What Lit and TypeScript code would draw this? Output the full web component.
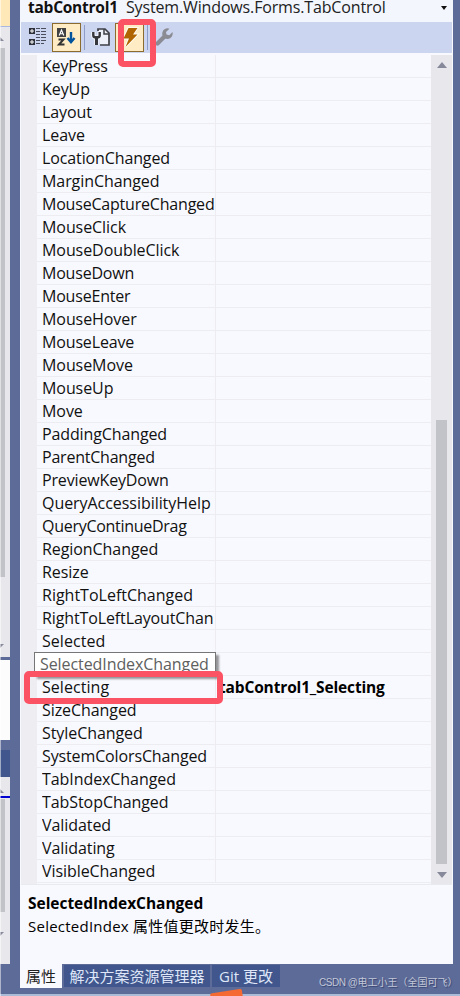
import { LitElement, html, css, svg, nothing } from "lit";
import { customElement } from "lit/decorators.js";
import { styleMap } from "lit/directives/style-map.js";

interface EventRow { name: string; handler?: string; tracking?: number }

const EVENTS: EventRow[] = [
  { name: "KeyPress", tracking: -0.2 },
  { name: "KeyUp" },
  { name: "Layout" },
  { name: "Leave" },
  { name: "LocationChanged", tracking: -0.12 },
  { name: "MarginChanged" },
  { name: "MouseCaptureChanged", tracking: -0.2 },
  { name: "MouseClick" },
  { name: "MouseDoubleClick" },
  { name: "MouseDown", tracking: -0.2 },
  { name: "MouseEnter", tracking: -0.2 },
  { name: "MouseHover" },
  { name: "MouseLeave", tracking: -0.15 },
  { name: "MouseMove" },
  { name: "MouseUp" },
  { name: "Move" },
  { name: "PaddingChanged", tracking: -0.12 },
  { name: "ParentChanged", tracking: -0.22 },
  { name: "PreviewKeyDown", tracking: -0.15 },
  { name: "QueryAccessibilityHelp", tracking: -0.05 },
  { name: "QueryContinueDrag", tracking: -0.28 },
  { name: "RegionChanged" },
  { name: "Resize" },
  { name: "RightToLeftChanged", tracking: 0 },
  { name: "RightToLeftLayoutChanged", tracking: -0.12 },
  { name: "Selected", tracking: 0.05 },
  { name: "SelectedIndexChanged" },
  { name: "Selecting", tracking: 0.05, handler: "tabControl1_Selecting" },
  { name: "SizeChanged" },
  { name: "StyleChanged" },
  { name: "SystemColorsChanged", tracking: -0.13 },
  { name: "TabIndexChanged" },
  { name: "TabStopChanged" },
  { name: "Validated" },
  { name: "Validating" },
  { name: "VisibleChanged" },
];

const icons = {
  category: svg`<path d="M0 0h6v6H0zM0 11h6v6H0z" fill="#2f313b"/><path d="M1 2.500h4v1H1zM2.500 1h1v4h-1zM1 13.500h4v1H1zM2.500 12h1v4h-1z" fill="#fff"/><path d="M7 .5h4M12 .5h5M7 3.500h4M12 3.500h5M7 6.500h4M12 6.500h5M7 9.500h4M12 9.500h5M7 12.500h4M12 12.500h5M7 15.500h4M12 15.500h3" stroke="#4a4d5c"/>`,
  sort: svg`<g fill="none"><path d="M0 0h9v9H0z" fill="#424242"/><path d="M2.200 7.500L4.500 2l2.300 5.500M3 5.800h3" stroke="#fff" stroke-width="1.100"/><path d="M1.500 11.500h5l-4.500 5h5.500" stroke="#333" stroke-width="2"/><path d="M14 4v9M10.500 10l3.500 4.200L17.500 10" stroke="#00539c" stroke-width="2.400"/></g>`,
  page: svg`<g fill="none"><path d="M6 3V1h7l4 4v12H8" stroke="#3f4047" stroke-width="1.700" fill="#eef0fa"/><path d="M12 1v5h5" stroke="#3f4047" stroke-width="1.500"/><path d="M1.300 4v3.500q0 2 3.200 2t3.200-2V4M4.500 8v9" stroke="#f2f4fc" stroke-width="4.500"/><path d="M1.300 4v3.500q0 2 3.200 2t3.200-2V4" stroke="#36373d" stroke-width="2.400"/><path d="M4.500 8v9" stroke="#36373d" stroke-width="3"/></g>`,
  bolt: svg`<path d="M5.500 0h9l-4.500 6.500h4.500L2.500 19l3.500-8.500H0.500z" fill="#b06500" stroke="#fffaf0" stroke-width="2" paint-order="stroke"/>`,
  wrench: svg`<path d="M2.500 15.500L9 9" stroke="#8a8b93" stroke-width="4.200" stroke-linecap="round"/><path d="M14.500 .8A5.300 5.300 0 1 0 17.500 4l-3.200 3.200-2.800-.6-.5-2.700z" fill="#8a8b93"/>`,
};

const icon = (name: keyof typeof icons) => html`<svg width="19" height="19" viewBox="0 0 19 19" overflow="visible">${icons[name]}</svg>`;

@customElement("event-grid")
export class EventGrid extends LitElement {
  static styles = css`
    :host { display: flex; height: 830px; box-sizing: border-box; border-bottom: 1px solid #e9eaf0; }
    .gutter { width: 16px; background: #eeedf2; }
    .rows { flex: 1; min-width: 0; }
    .row { display: grid; grid-template-columns: 179px 1fr; height: 22px; line-height: 22px; border-bottom: 1px solid #ececf1; }
    .name { border-right: 1px solid #ececf1; padding-left: 5px; overflow: hidden; white-space: nowrap; }
    .clip { display: block; overflow: hidden; width: 171px; height: 22px; }
    .wide { width: 173px; }
    .handler { padding-left: 3px; font-weight: 700; font-size: 15.5px; letter-spacing: -0.15px; white-space: nowrap; color: #000; }
    .bar { width: 21px; background: #e8e7ec; display: flex; flex-direction: column; align-items: center; box-sizing: border-box; padding: 7px 0 6px; }
    .thumb { margin-top: 352px; width: 11px; height: 444px; background: #c2c3c9; }
    .up, .down { border: 5.5px solid transparent; border-top: 0; border-bottom: 6px solid #868999; }
    .down { margin-top: 8px; border-bottom: 0; border-top: 6px solid #868999; }
  `;
  render() {
    return html`
      <div class="gutter"></div>
      <div class="rows">
        ${EVENTS.map(e => html`<div class="row">
          <div class="name" style=${styleMap({ letterSpacing: `${e.tracking ?? -0.07}px` })}><span class="clip ${e.name.startsWith("Mouse") ? "wide" : ""}">${e.name}</span></div>
          ${e.handler ? html`<div class="handler">${e.handler}</div>` : nothing}
        </div>`)}
      </div>
      <div class="bar"><i class="up"></i><i class="thumb"></i><i class="down"></i></div>`;
  }
}

@customElement("app-root")
export class AppRoot extends LitElement {
  static styles = css`
    :host { display: flex; width: 460px; height: 996px; overflow: hidden; position: relative; background: #5d6b99; font: 16px/23px "Open Sans", "Noto Sans CJK SC", sans-serif; color: #111; }
    .edge { width: 10px; height: 964px; display: flex; flex-direction: column; overflow: hidden; }
    .doc { height: 26px; background: #ffe8b8; border-bottom: 1px solid #a9b9e2; }
    .scroll { background: #e8e7ec; height: 630px; box-sizing: border-box; padding-top: 9px; }
    .blank { margin-top: 3px; height: 80px; background: #fcfcfc; }
    .caption { margin-top: 10px; height: 27px; background: #40568d; }
    .lower { height: 187px; padding-top: 11px; }
    .tri { display: block; width: 0; margin-left: -6px; border: 5.5px solid transparent; border-top: 0; border-bottom: 5px solid #868999; }
    .tri.dn { border-bottom: 0; border-top: 5px solid #868999; }
    .track { margin: 7px 0 67px; width: 5px; height: 529px; background: #c2c3c9; }
    .blue { margin-top: 3px; height: 2px; background: #0000d0; }
    .lower .track { height: 113px; margin: 1px 0 20px; }
    .panel { margin-left: 10px; width: 433px; height: 996px; }
    .body { height: 964px; background: #f8f9fe; }
    .head { height: 22px; display: flex; background: #f3f6fd; padding: 0 6px 0 8px; line-height: 15px; white-space: nowrap; }
    .head b { width: 98px; font-size: 15.5px; letter-spacing: -0.25px; }
    .head span { flex: 1; letter-spacing: -0.15px; color: #222; }
    .caret { width: 0; height: 0; margin-top: 6px; border: 3.5px solid transparent; border-top: 4px solid #111; border-bottom: 0; }
    .tools { margin: 0 1px; height: 31px; background: #ccd5f0; display: flex; align-items: center; }
    .btn { width: 29px; height: 29px; box-sizing: border-box; padding: 4px; display: grid; margin-top: -1px; border: 1px solid transparent; }
    .first { margin-left: 3px; }
    .sort, .bolt { background: #ffecc5; border-color: #8b6c2e; }
    .sort { margin-left: -1px; }
    .page { margin-left: -1px; width: 28px; }
    .bolt { padding-left: 7px; }
    .wrench { margin-left: -1px; }
    .sep { width: 1px; height: 25px; background: #8d9cc9; margin: 0 3px; }
    event-grid { margin: 2px 1px 0; }
    .desc { padding: 7px 8px; line-height: 23px; color: #000; }
    .desc b { display: block; font-size: 15.500px; letter-spacing: -0.03px; }
    .desc span { font-size: 15px; letter-spacing: 0.24px; }
    .tabs { display: flex; height: 24px; gap: 2px; font-size: 15px; white-space: nowrap; }
    .tab { height: 22px; margin-top: 1px; line-height: 22px; box-sizing: border-box; background: #40568d; color: #dfe6f8; text-align: center; }
    .tab.on { width: 42px; height: 24px; margin-top: 0; line-height: 24px; background: #f8f9fe; color: #222; }
    .tree { width: 146px; }
    .git { width: 68px; }
    .tip { position: absolute; left: 34px; top: 652px; width: 182px; height: 24px; box-sizing: border-box; border: 1px solid #767676; padding-left: 5px; line-height: 22px; background: #fff; color: #606060; box-shadow: 3px 3px 2px #0006; letter-spacing: -0.08px; }
    .mark { position: absolute; box-sizing: border-box; border: 6px solid #fc5364; border-radius: 5px; }
    .m1 { left: 118px; top: 19px; width: 37.5px; height: 48px; }
    .m2 { left: 24px; top: 671px; width: 199px; height: 33px; }
    .credit { position: absolute; left: 319px; top: 975px; display: flex; font: 10px/16px "Liberation Sans", "Noto Sans CJK SC", sans-serif; color: #c3c8d8; white-space: pre; text-shadow: 1px 1px 1px #35426e; }
    .credit span { letter-spacing: -0.45px; }
    .strip { position: absolute; left: 0; bottom: 0; width: 460px; height: 2px; background: #a9bbd6; }
    .orange { position: absolute; left: 211px; top: 991px; width: 32px; height: 16px; background: #f46a32; border-radius: 2px; transform: rotate(-9deg); }
    .shine { position: absolute; left: 0; top: 0; width: 1px; height: 996px; background: #ffffff80; }
  `;
  render() {
    return html`
      <div class="edge">
        <div class="doc"></div>
        <div class="scroll"><i class="tri"></i><div class="track"></div><i class="tri dn"></i></div>
        <div class="blank"></div>
        <div class="caption"></div>
        <div class="scroll lower"><i class="tri"></i><div class="blue"></div><div class="track"></div><i class="tri dn"></i></div>
      </div>
      <div class="panel">
        <div class="body">
          <div class="head"><b>tabControl1</b><span>System.Windows.Forms.TabControl</span><i class="caret"></i></div>
          <div class="tools">
            <div class="btn first">${icon("category")}</div>
            <div class="btn sort">${icon("sort")}</div>
            <i class="sep"></i>
            <div class="btn page">${icon("page")}</div>
            <div class="btn bolt">${icon("bolt")}</div>
            <i class="sep"></i>
            <div class="btn wrench">${icon("wrench")}</div>
          </div>
          <event-grid></event-grid>
          <div class="desc"><b>SelectedIndexChanged</b><span>SelectedIndex 属性值更改时发生。</span></div>
        </div>
        <div class="tabs"><div class="tab on">属性</div><div class="tab tree">解决方案资源管理器</div><div class="tab git">Git 更改</div></div>
      </div>
      <div class="tip">SelectedIndexChanged</div>
      <div class="mark m1"></div>
      <div class="mark m2"></div>
      <div class="strip"></div>
      <div class="orange"></div>
      <div class="credit"><span>CSDN @</span>电工小王（全国可飞）</div>
      <div class="shine"></div>`;
  }
}
